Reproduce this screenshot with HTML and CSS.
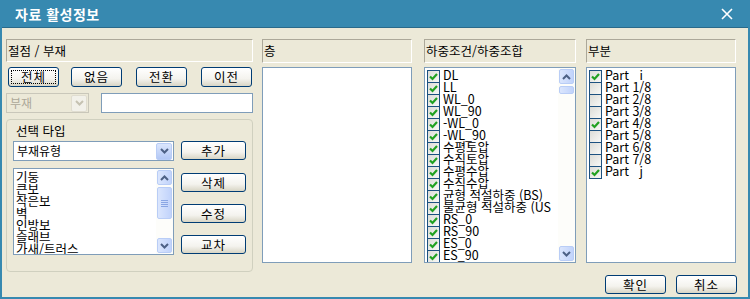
FILE: index.html
```html
<!DOCTYPE html>
<html lang="ko">
<head>
    <meta charset="UTF-8">
    <title>자료 활성정보</title>
    <link rel="stylesheet" href="styles.css">
</head>
<body>
<div class="window">
    <div class="titlebar">
        <span class="title">자료 활성정보</span>
        <svg class="close" width="12" height="12" viewBox="0 0 12 12"><path d="M1 1 L11 11 M11 1 L1 11" stroke="#fff" stroke-width="1.6"/></svg>
    </div>

    <div class="content">
        <div class="columns">
            <!-- 절점 / 부재 -->
            <div class="col col-main">
                <div class="header">절점 / 부재</div>
                <div class="btn-row">
                    <button class="btn focus">전체</button>
                    <button class="btn">없음</button>
                    <button class="btn">전환</button>
                    <button class="btn">이전</button>
                </div>
                <div class="filter-row">
                    <div class="combo disabled">
                        <span class="combo-text">부재</span>
                        <span class="drop"><svg width="9" height="6" viewBox="0 0 9 6"><path d="M1 1 L4.5 4.5 L8 1" fill="none" stroke="#c5c2b2" stroke-width="2"/></svg></span>
                    </div>
                    <div class="textbox"></div>
                </div>
                <div class="groupbox">
                    <div class="group-title">선택 타입</div>
                    <div class="group-body">
                        <div class="group-left">
                            <div class="combo">
                                <span class="combo-text">부재유형</span>
                                <span class="drop"><svg width="9" height="6" viewBox="0 0 9 6"><path d="M1 1 L4.5 4.5 L8 1" fill="none" stroke="#4d6185" stroke-width="2"/></svg></span>
                            </div>
                            <div class="listbox small">
                                <ul class="items">
                                    <li>기둥</li>
                                    <li>큰보</li>
                                    <li>작은보</li>
                                    <li>벽</li>
                                    <li>인방보</li>
                                    <li>슬래브</li>
                                    <li>가새/트러스</li>
                                </ul>
                                <div class="scrollbar">
                                    <span class="sb-btn"><svg width="9" height="6" viewBox="0 0 9 6"><path d="M1 5 L4.5 1.5 L8 5" fill="none" stroke="#4d6185" stroke-width="2"/></svg></span>
                                    <span class="sb-thumb big"><i></i><i></i><i></i><i></i></span>
                                    <span class="sb-track"></span>
                                    <span class="sb-btn"><svg width="9" height="6" viewBox="0 0 9 6"><path d="M1 1 L4.5 4.5 L8 1" fill="none" stroke="#4d6185" stroke-width="2"/></svg></span>
                                </div>
                            </div>
                        </div>
                        <div class="group-right">
                            <button class="btn side">추가</button>
                            <button class="btn side first">삭제</button>
                            <button class="btn side">수정</button>
                            <button class="btn side">교차</button>
                        </div>
                    </div>
                </div>
            </div>

            <!-- 층 -->
            <div class="col col-list">
                <div class="header">층</div>
                <div class="listbox tall"></div>
            </div>

            <!-- 하중조건/하중조합 -->
            <div class="col col-list wide">
                <div class="header">하중조건/하중조합</div>
                <div class="listbox tall">
                    <ul class="items checks" id="loads"></ul>
                    <div class="scrollbar">
                        <span class="sb-btn"><svg width="9" height="6" viewBox="0 0 9 6"><path d="M1 5 L4.5 1.5 L8 5" fill="none" stroke="#4d6185" stroke-width="2"/></svg></span>
                        <span class="sb-thumb tiny"></span>
                        <span class="sb-track"></span>
                        <span class="sb-btn"><svg width="9" height="6" viewBox="0 0 9 6"><path d="M1 1 L4.5 4.5 L8 1" fill="none" stroke="#4d6185" stroke-width="2"/></svg></span>
                    </div>
                </div>
            </div>

            <!-- 부분 -->
            <div class="col col-list">
                <div class="header">부분</div>
                <div class="listbox tall">
                    <ul class="items checks" id="parts"></ul>
                </div>
            </div>
        </div>

        <div class="footer">
            <button class="btn ok">확인</button>
            <button class="btn ok">취소</button>
        </div>
    </div>
</div>

<script>
    const check = '<svg width="9" height="8" viewBox="0 0 9 8"><path d="M1 3.5 L3.5 6 L8 1" fill="none" stroke="#21a121" stroke-width="2.2"/></svg>';

    function fill(id, rows) {
        const ul = document.getElementById(id);
        ul.innerHTML = rows.map(r =>
            `<li><span class="cb">${r[1] ? check : ''}</span><span class="lbl">${r[0]}</span></li>`
        ).join('');
    }

    fill('loads', [
        ['DL', 1], ['LL', 1], ['WL_0', 1], ['WL_90', 1], ['-WL_0', 1], ['-WL_90', 1],
        ['수평토압', 1], ['수직토압', 1], ['수평수압', 1], ['수직수압', 1],
        ['균형 적설하중 (BS)', 1], ['불균형 적설하중 (US', 1],
        ['RS_0', 1], ['RS_90', 1], ['ES_0', 1], ['ES_90', 1], ['ES_0A', 1]
    ]);

    fill('parts', [
        ['Part &nbsp;&nbsp;i', 1], ['Part 1/8', 0], ['Part 2/8', 0], ['Part 3/8', 0],
        ['Part 4/8', 1], ['Part 5/8', 0], ['Part 6/8', 0], ['Part 7/8', 0],
        ['Part &nbsp;&nbsp;j', 1]
    ]);
</script>
</body>
</html>
```

FILE: styles.css
```css
* {
    box-sizing: border-box;
}

body {
    margin: 0;
    font-family: "Noto Sans CJK KR", "DejaVu Sans", sans-serif;
    font-size: 12px;
    color: #000;
    background: #ece9d8;
}

.window {
    width: 750px;
    height: 299px;
    border: 2px solid #3789b0;
    border-top: 0;
    background: #ece9d8;
    display: flex;
    flex-direction: column;
    overflow: hidden;
}

.titlebar {
    height: 28px;
    margin: 0 -2px;
    background: #3789b0;
    border-bottom: 1px solid #2a6a8a;
    display: flex;
    align-items: center;
    justify-content: space-between;
    padding: 0 17px 0 15px;
    color: #fff;
}

.title {
    font-size: 14px;
    font-weight: bold;
    letter-spacing: 0.5px;
}

.content {
    flex: 1;
    padding: 11px 10px 0 4px;
    display: flex;
    flex-direction: column;
}

.columns {
    display: flex;
    height: 224px;
}

.col {
    display: flex;
    flex-direction: column;
}

.col-main {
    width: 247px;
    margin-right: 9px;
}

.col-list {
    width: 150px;
    margin-right: 12px;
}

.col-list.wide {
    width: 152px;
    margin-right: 10px;
}

.col-list:last-child {
    margin-right: 0;
}

.header {
    height: 24px;
    line-height: 21px;
    padding-left: 1px;
    font-size: 12.5px;
    border: 1px solid #fff;
    border-top-color: #aca899;
    border-left-color: #aca899;
    white-space: nowrap;
}

/* buttons */
.btn {
    font: inherit;
    font-size: 12.5px;
    letter-spacing: 1px;
    line-height: 14px;
    padding: 0;
    height: 20px;
    border: 1px solid #003c74;
    border-radius: 3px;
    background: linear-gradient(#ffffff, #f4f3ee 60%, #d8d5c5);
    color: #000;
    position: relative;
}

.btn.focus::after {
    content: "";
    position: absolute;
    inset: 2px;
    border: 1px dotted #000;
}

.btn-row {
    display: flex;
    margin-top: 5px;
    padding-left: 2px;
    gap: 12px;
}

.btn-row .btn {
    width: 51px;
}

.btn-row .btn:nth-child(3),
.btn-row .btn:nth-child(4) {
    margin-left: 2px;
}

/* combo & text */
.filter-row {
    display: flex;
    margin-top: 6px;
    height: 20px;
}

.combo {
    display: flex;
    align-items: center;
    height: 20px;
    border: 1px solid #7f9db9;
    background: #fff;
    padding: 1px;
}

.combo-text {
    flex: 1;
    padding-left: 2px;
    line-height: 16px;
}

.drop {
    width: 16px;
    height: 17px;
    border: 1px solid #b9cdf6;
    border-radius: 2px;
    background: linear-gradient(#dbe6fd, #b3c8f5);
    display: flex;
    align-items: center;
    justify-content: center;
}

.combo.disabled {
    width: 83px;
    border-color: #c9c7ba;
    background: #ece9d8;
    color: #aca899;
}

.combo.disabled .drop {
    border-color: #e0ddd0;
    background: #f2f1ea;
}

.textbox {
    margin-left: 12px;
    width: 152px;
    border: 1px solid #7f9db9;
    background: #fff;
}

/* group box */
.groupbox {
    margin-top: 6px;
    flex: 1;
    border: 1px solid #d0d0bf;
    border-radius: 4px;
    padding: 4px 6px 5px 6px;
    display: flex;
    flex-direction: column;
}

.group-title {
    line-height: 14px;
    padding-left: 3px;
    margin-bottom: 3px;
    font-size: 12.5px;
}

.group-body {
    display: flex;
    flex: 1;
}

.group-left {
    width: 161px;
    display: flex;
    flex-direction: column;
    gap: 7px;
}

.group-right {
    margin-left: 7px;
    display: flex;
    flex-direction: column;
}

.btn.side {
    width: 65px;
    height: 19px;
    margin-bottom: 12px;
}

.btn.side.first {
    margin-top: 1px;
}

/* list boxes */
.listbox {
    border: 1px solid #7f9db9;
    background: #fff;
    display: flex;
    overflow: hidden;
    position: relative;
}

.listbox.small {
    height: 87px;
}

.listbox.tall {
    margin-top: 4px;
    height: 196px;
}

.items {
    list-style: none;
    margin: 0;
    padding: 2px 0 0 2px;
    flex: 1;
    overflow: hidden;
}

.items li {
    height: 12px;
    line-height: 12px;
    white-space: nowrap;
    font-size: 12.5px;
}

.checks li {
    display: flex;
    align-items: flex-start;
}

.cb {
    width: 13px;
    height: 13px;
    flex: none;
    border: 1px solid #1c5180;
    background: linear-gradient(135deg, #dcdcd7, #f8f8f6);
    display: flex;
    align-items: center;
    justify-content: center;
    margin-right: 3px;
}

.lbl {
    line-height: 12px;
    margin-top: -1px;
}

/* scrollbars */
.scrollbar {
    width: 17px;
    flex: none;
    display: flex;
    flex-direction: column;
    background: #fdfdfa;
    padding: 1px;
}

.sb-btn,
.sb-thumb {
    border: 1px solid #b9cdf6;
    border-radius: 2px;
    background: linear-gradient(90deg, #dbe6fd, #c1d3fb);
    display: flex;
    align-items: center;
    justify-content: center;
    flex-direction: column;
}

.sb-btn {
    height: 15px;
}

.sb-thumb {
    margin-top: 2px;
}

.sb-thumb.big {
    height: 32px;
    gap: 1px;
}

.sb-thumb.big i {
    display: block;
    width: 7px;
    height: 1px;
    background: #8aa6e4;
}

.sb-thumb.tiny {
    height: 8px;
}

.sb-track {
    flex: 1;
}

/* footer */
.footer {
    display: flex;
    justify-content: flex-end;
    gap: 10px;
    margin-top: 12px;
    padding-right: 1px;
}

.btn.ok {
    width: 61px;
    height: 19px;
}
```
